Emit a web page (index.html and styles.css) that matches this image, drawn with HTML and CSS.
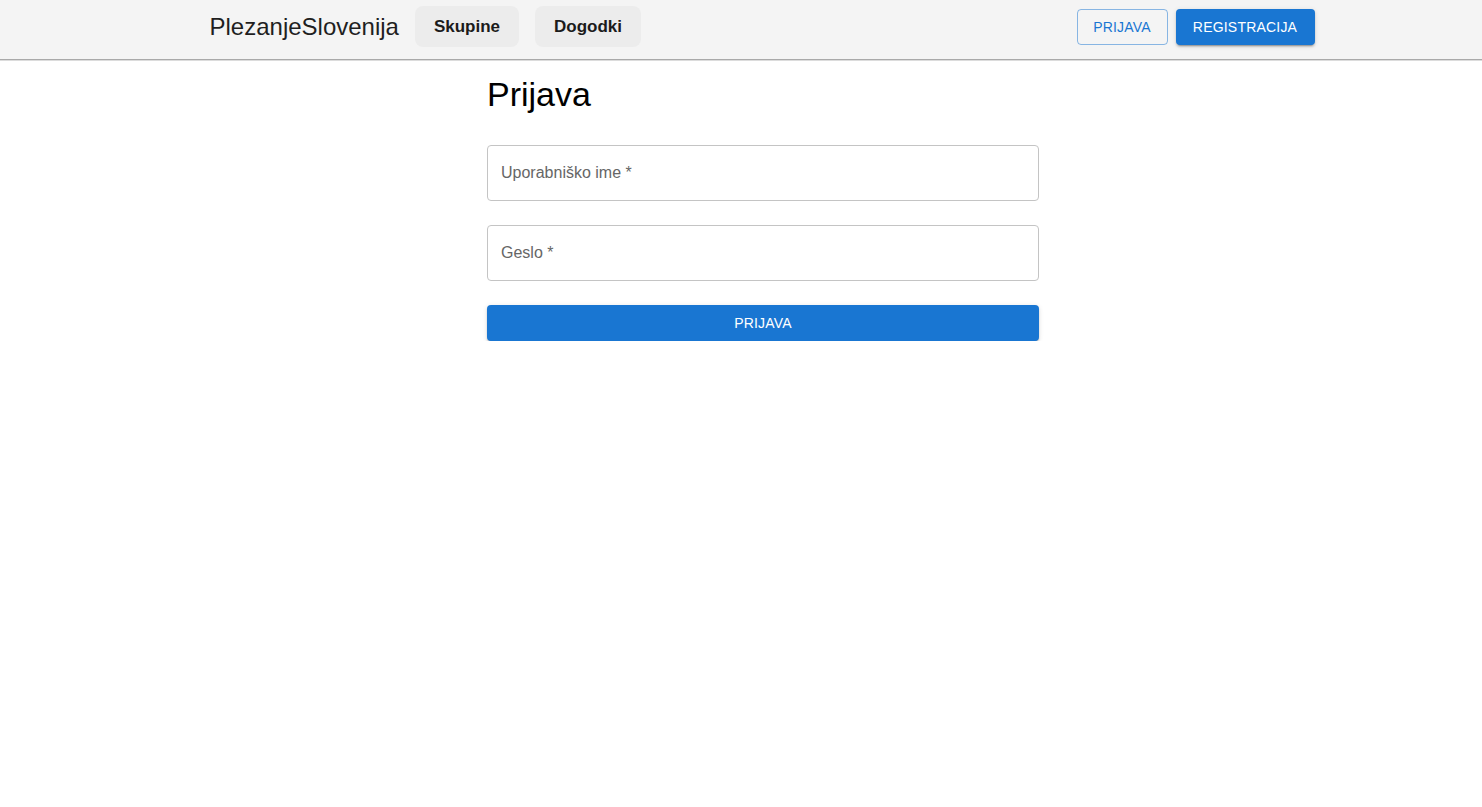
FILE: index.html
```html
<!DOCTYPE html>
<html lang="sl">
<head>
<meta charset="utf-8">
<title>Prijava</title>
<link rel="stylesheet" href="styles.css">
</head>
<body>
<header class="topbar">
  <div class="topbar-inner">
    <nav class="nav-left">
      <span class="brand">PlezanjeSlovenija</span>
      <a class="nav-link" href="#">Skupine</a>
      <a class="nav-link" href="#">Dogodki</a>
    </nav>
    <div class="nav-right">
      <button class="btn btn-outlined">Prijava</button>
      <button class="btn btn-contained">Registracija</button>
    </div>
  </div>
</header>
<main class="page">
  <form class="login">
    <h1 class="title">Prijava</h1>
    <div class="field"><span class="field-label">Uporabniško ime *</span></div>
    <div class="field"><span class="field-label">Geslo *</span></div>
    <button type="button" class="btn btn-contained btn-full">Prijava</button>
  </form>
</main>
</body>
</html>
```

FILE: styles.css
```css
* { box-sizing: border-box; }
html, body { margin: 0; padding: 0; background: #fff; }
body { font-family: "Liberation Sans", Arial, sans-serif; color: #000; }

.topbar {
  background: #f4f4f4;
  height: 60px;
  border-bottom: 1px solid #a9a9a9;
  box-shadow: 0 1px 0 #dcdcdc;
  padding-left: 42px;
  display: flex;
  justify-content: center;
}
.topbar-inner {
  width: 1105px;
  display: flex;
  align-items: center;
  justify-content: space-between;
  height: 53px;
}
.nav-left { display: flex; align-items: center; gap: 16px; }
.brand {
  font-size: 24px;
  color: #1f1f1f;
}
.nav-link {
  display: inline-flex;
  align-items: center;
  justify-content: center;
  height: 41px;
  padding: 0 16px;
  background: #ececec;
  border-radius: 8px;
  font-weight: bold;
  font-size: 17px;
  color: #1b1b1b;
  text-decoration: none;
}
.nav-link:first-of-type { width: 104px; }
.nav-link:last-of-type { width: 106px; }

.nav-right { display: flex; align-items: center; gap: 8px; margin-top: 1px; }

.btn {
  font-family: "Liberation Sans", Arial, sans-serif;
  font-size: 14px;
  text-transform: uppercase;
  letter-spacing: 0.2px;
  height: 36px;
  border-radius: 4px;
  cursor: pointer;
  display: inline-flex;
  align-items: center;
  justify-content: center;
}
.btn-outlined {
  background: transparent;
  color: #1976d2;
  border: 1px solid rgba(25, 118, 210, 0.5);
  width: 91px;
  padding: 0;
}
.btn-contained {
  background: #1976d2;
  color: #fff;
  border: none;
  width: 139px;
  padding: 0;
  box-shadow: 0 3px 1px -2px rgba(0,0,0,0.2), 0 2px 2px 0 rgba(0,0,0,0.14), 0 1px 5px 0 rgba(0,0,0,0.12);
}

.page {
  padding-left: 44px;
  display: flex;
  justify-content: center;
}
.login {
  width: 552px;
  display: flex;
  flex-direction: column;
}
.title {
  font-size: 34px;
  font-weight: normal;
  line-height: 42px;
  margin: 13px 0 30px;
  color: #000;
}
.field {
  height: 56px;
  border: 1px solid #c4c4c4;
  border-radius: 4px;
  display: flex;
  align-items: center;
  padding: 0 13px;
  margin-bottom: 24px;
}
.field-label {
  font-size: 16px;
  color: #666;
}
.btn-full { width: 100%; }
```
